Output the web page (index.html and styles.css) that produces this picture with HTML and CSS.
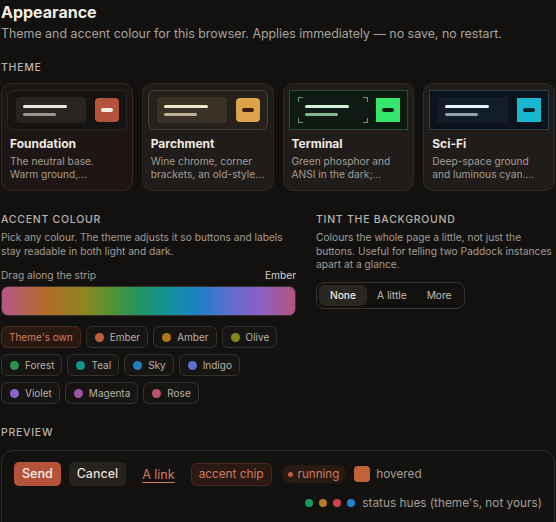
FILE: index.html
```html
<!DOCTYPE html>
<html lang="en">
<head>
  <meta charset="UTF-8" />
  <title>Appearance</title>
  <meta name="viewport" content="width=device-width, initial-scale=1.0" />
  <link rel="stylesheet" href="styles.css">
</head>
<body>
  <div class="page">
    <h1 class="title">Appearance</h1>
    <p class="lede">Theme and accent colour for this browser. Applies immediately — no save, no restart.</p>

    <!-- Themes -->
    <div class="label">Theme</div>
    <div class="themes">
      <div class="theme-card active foundation">
        <div class="swatch">
          <div class="block"><i class="line a"></i><i class="line b"></i></div>
          <div class="btn-sq"><i></i></div>
        </div>
        <div class="theme-name">Foundation</div>
        <div class="theme-desc">The neutral base.<br>Warm ground,...</div>
      </div>
      <div class="theme-card parchment">
        <div class="swatch">
          <div class="block"><i class="line a"></i><i class="line b"></i></div>
          <div class="btn-sq"><i></i></div>
        </div>
        <div class="theme-name">Parchment</div>
        <div class="theme-desc">Wine chrome, corner<br>brackets, an old-style...</div>
      </div>
      <div class="theme-card terminal">
        <div class="swatch">
          <div class="block"><i class="line a"></i><i class="line b"></i>
            <span class="corner tl"></span><span class="corner tr"></span><span class="corner bl"></span><span class="corner br"></span>
          </div>
          <div class="btn-sq"><i></i></div>
        </div>
        <div class="theme-name">Terminal</div>
        <div class="theme-desc">Green phosphor and<br>ANSI in the dark;...</div>
      </div>
      <div class="theme-card scifi">
        <div class="swatch">
          <div class="block"><i class="line a"></i><i class="line b"></i></div>
          <div class="btn-sq"><i></i></div>
        </div>
        <div class="theme-name">Sci-Fi</div>
        <div class="theme-desc">Deep-space ground<br>and luminous cyan....</div>
      </div>
    </div>

    <!-- Accent + tint -->
    <div class="split">
      <div class="col">
        <div class="label">Accent colour</div>
        <p class="help">Pick any colour. The theme adjusts it so buttons and labels stay readable in both light and dark.</p>
        <div class="strip-head"><span>Drag along the strip</span><span class="current">Ember</span></div>
        <div class="strip"></div>
        <div class="chips">
          <span class="chip own">Theme's own</span>
          <span class="chip"><i class="dot ember"></i>Ember</span>
          <span class="chip"><i class="dot amber"></i>Amber</span>
          <span class="chip"><i class="dot olive"></i>Olive</span>
          <span class="chip"><i class="dot forest"></i>Forest</span>
          <span class="chip"><i class="dot teal"></i>Teal</span>
          <span class="chip"><i class="dot sky"></i>Sky</span>
          <span class="chip"><i class="dot indigo"></i>Indigo</span>
          <span class="chip"><i class="dot violet"></i>Violet</span>
          <span class="chip"><i class="dot magenta"></i>Magenta</span>
          <span class="chip"><i class="dot rose"></i>Rose</span>
        </div>
      </div>
      <div class="col">
        <div class="label">Tint the background</div>
        <p class="help">Colours the whole page a little, not just the buttons. Useful for telling two Paddock instances apart at a glance.</p>
        <div class="segmented">
          <span class="seg on">None</span>
          <span class="seg">A little</span>
          <span class="seg">More</span>
        </div>
      </div>
    </div>

    <!-- Preview -->
    <div class="label preview-label">Preview</div>
    <div class="preview">
      <div class="preview-row">
        <span class="btn primary">Send</span>
        <span class="btn ghost">Cancel</span>
        <span class="link">A link</span>
        <span class="accent-chip">accent chip</span>
        <span class="pill"><i class="pdot"></i>running</span>
        <span class="hover-sq"></span><span class="muted">hovered</span>
      </div>
      <div class="status-row">
        <i class="sdot green"></i><i class="sdot amber"></i><i class="sdot red"></i><i class="sdot blue"></i>
        <span class="muted">status hues (theme's, not yours)</span>
      </div>
    </div>
  </div>
</body>
</html>
```

FILE: styles.css
```css
* { box-sizing: border-box; }
html, body {
  margin: 0; padding: 0;
  background: #121110; color: #ece7e0;
  font-family: Inter, "Noto Sans", sans-serif;
}
.page { padding: 0 1px; }

.title { margin: 0; font-size: 16px; font-weight: 700; line-height: 24px; color: #f1ece5; }
.lede { margin: 2px 0 0; font-size: 12.4px; line-height: 16px; color: #a9a39b; }

.label {
  font-size: 10.5px; font-weight: 500; letter-spacing: 0.07em; text-transform: uppercase;
  color: #b9b3aa; line-height: 14px; margin-top: 19px;
}

/* Темы */
.themes { display: grid; grid-template-columns: repeat(4, 1fr); gap: 9px; margin-top: 8px; }
.theme-card {
  background: #1f1c19; border: 1px solid #2e2a26; border-radius: 10px;
  padding: 6px 5px 9px;
}
.theme-card.active { background: #1d1614; border-color: #3a2721; }
.swatch {
  height: 40px; border-radius: 6px; border: 1px solid #2c2723; background: #161412;
  display: flex; align-items: center; justify-content: space-between; padding: 0 7px 0 8px;
}
.block {
  position: relative; width: 70px; height: 26px; border-radius: 4px; background: #28241f;
  display: flex; flex-direction: column; justify-content: center; gap: 5px; padding-left: 7px;
}
.line { display: block; height: 3px; border-radius: 2px; }
.line.a { width: 44px; background: #ece6dc; }
.line.b { width: 33px; background: #9c958c; }
.btn-sq {
  width: 24px; height: 24px; border-radius: 4px; background: #b5533a;
  display: flex; align-items: center; justify-content: center;
}
.btn-sq i { width: 12px; height: 4px; border-radius: 2px; background: #f5ece4; }

.parchment .swatch { background: #26211a; border-color: #4a3f30; }
.parchment .block { background: #3a3226; }
.parchment .line.a { background: #f3e6c8; }
.parchment .line.b { background: #bfb096; }
.parchment .btn-sq { background: #dca24c; }
.parchment .btn-sq i { background: #3a1d12; }

.terminal .swatch { background: #0c1a11; border-color: #2b4a36; border-radius: 0; }
.terminal .block { background: #111a14; border-radius: 0; }
.terminal .line.a { background: #cdf2d5; }
.terminal .line.b { background: #86b592; }
.terminal .btn-sq { background: #34e86c; border-radius: 0; }
.terminal .btn-sq i { background: #0a2012; }
.corner { position: absolute; width: 5px; height: 5px; border: 0 solid #5f9a6f; }
.corner.tl { top: 0; left: 0; border-top-width: 1px; border-left-width: 1px; }
.corner.tr { top: 0; right: 0; border-top-width: 1px; border-right-width: 1px; }
.corner.bl { bottom: 0; left: 0; border-bottom-width: 1px; border-left-width: 1px; }
.corner.br { bottom: 0; right: 0; border-bottom-width: 1px; border-right-width: 1px; }

.scifi .swatch { background: #0b141d; border-color: #2b4152; border-radius: 0; }
.scifi .block { background: #111d28; border-radius: 0; }
.scifi .line.a { background: #e6f3fc; }
.scifi .line.b { background: #8fa3b2; }
.scifi .btn-sq { background: #17b7d0; border-radius: 0; }
.scifi .btn-sq i { background: #062028; }

.theme-name { font-size: 12px; font-weight: 700; line-height: 16px; margin: 6px 0 0 3px; color: #efe9e1; }
.theme-desc { font-size: 10.2px; line-height: 13px; color: #a39d95; margin: 3px 0 0 3px; white-space: nowrap; }

/* Акцент и тон */
.split { display: grid; grid-template-columns: 295px 1fr; gap: 20px; margin-top: 8px; }
.split .label { margin-top: 14px; }
.help { margin: 4px 0 0; font-size: 10.2px; line-height: 13.5px; color: #a39d95; }
.strip-head {
  display: flex; justify-content: space-between; margin-top: 10px;
  font-size: 10.2px; line-height: 14px; color: #a39d95;
}
.strip-head .current { color: #d6d0c8; }
.strip {
  height: 30px; margin-top: 4px; border-radius: 7px; border: 1px solid #3a3430;
  background: linear-gradient(90deg, #b5568a 0%, #b4682c 14%, #8f861f 28%, #4e9236 38%, #1f9562 47%, #11929a 57%, #1a80c6 67%, #5b6fd0 77%, #8b5fc6 88%, #b4547e 100%);
}
.chips { display: flex; flex-wrap: wrap; gap: 6px 5px; margin-top: 10px; }
.chip {
  display: inline-flex; align-items: center; gap: 6px; height: 22px; padding: 0 7px 0 8px;
  border: 1px solid #34302b; border-radius: 6px; background: #171513;
  font-size: 10px; color: #b8b2a9;
}
.chip.own { background: #2a1913; border-color: #4a2a20; color: #cf7c5e; padding: 0 7px; }
.dot { width: 9px; height: 9px; border-radius: 50%; }
.dot.ember { background: #c0603b; }
.dot.amber { background: #b07818; }
.dot.olive { background: #878719; }
.dot.forest { background: #2a914f; }
.dot.teal { background: #10968b; }
.dot.sky { background: #1a82c2; }
.dot.indigo { background: #5c70d0; }
.dot.violet { background: #8a62c8; }
.dot.magenta { background: #a052aa; }
.dot.rose { background: #b9526a; }

.segmented {
  display: inline-flex; margin-top: 10px; padding: 2px;
  border: 1px solid #38332e; border-radius: 8px;
}
.seg { padding: 0 10px; height: 21px; line-height: 21px; border-radius: 6px; font-size: 10.2px; color: #c3bdb4; }
.seg.on { background: #2a2621; color: #ece6de; font-weight: 500; padding: 0 11px; }

/* Превью */
.preview-label { margin-top: 22px; }
.preview {
  margin-top: 10px; border: 1px solid #302c28; border-radius: 12px; background: #141210;
  padding: 11px 12px 12px; height: 90px;
}
.preview-row { display: flex; align-items: center; }
.btn { height: 24px; line-height: 24px; padding: 0 8px; border-radius: 5px; font-size: 12.5px; font-weight: 500; }
.btn.primary { background: #b5533a; color: #fbeee6; margin-right: 8px; }
.btn.ghost { background: #26221e; color: #e4ded6; margin-right: 16px; }
.link { font-size: 12.5px; color: #d27c5d; text-decoration: underline; text-underline-offset: 3px; margin-right: 16px; }
.accent-chip {
  height: 23px; line-height: 21px; padding: 0 7px; border: 1px solid #4a2a20; border-radius: 6px;
  background: #2a1913; color: #cf7c5e; font-size: 11.8px; margin-right: 10px;
}
.pill {
  display: inline-flex; align-items: center; gap: 5px; height: 18px; padding: 0 7px 0 6px;
  border-radius: 9px; background: #2a1a14; color: #cf7c5e; font-size: 11.6px; margin-right: 8px;
}
.pdot { width: 5px; height: 5px; border-radius: 50%; background: #c0603b; }
.hover-sq { width: 16px; height: 16px; border-radius: 4px; background: #c2613a; margin-right: 6px; }
.muted { font-size: 11.8px; color: #a39d95; }
.status-row { display: flex; align-items: center; justify-content: flex-end; gap: 6px; margin-top: 10px; }
.sdot { width: 8px; height: 8px; border-radius: 50%; }
.sdot.green { background: #16995b; }
.sdot.amber { background: #b57c20; }
.sdot.red { background: #d1414a; }
.sdot.blue { background: #1f82d1; margin-right: 1px; }
```
